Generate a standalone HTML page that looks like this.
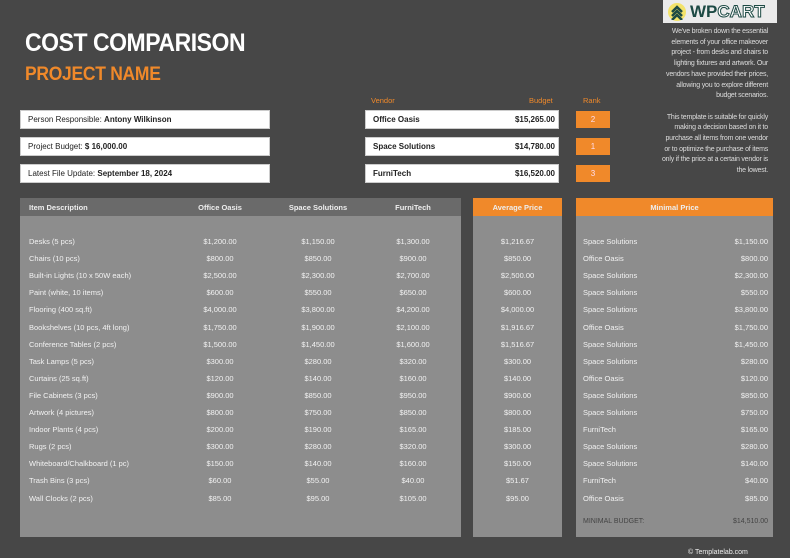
<!DOCTYPE html>
<html><head><meta charset="utf-8"><style>
*{margin:0;padding:0;box-sizing:border-box}
body{width:790px;height:558px;background:#474747;font-family:"Liberation Sans",sans-serif;position:relative;overflow:hidden;color:#fff}
.a{position:absolute;white-space:nowrap}
.box{position:absolute;background:#fff;color:#222;font-size:8px;line-height:17px;padding-left:7px;border:1px solid #ccc}
.rk{position:absolute;background:#f0892a;color:#fde;font-size:8px;text-align:center;line-height:17px;width:34px;height:17px;left:576px}
.t{font-size:7.5px;color:#f2f2f2}
.h{font-size:7.5px;color:#eee;font-weight:bold}
</style></head><body>
<div class="a" style="left:663px;top:0;width:114px;height:23px;background:#ebebeb;"></div>
<div class="a" style="left:668px;top:3px;width:18px;height:18px;border-radius:50%;background:#f3e36a"></div>
<svg class="a" style="left:670px;top:4px" width="14" height="16"><path d="M2 8 L7 3 L12 8 M2 12 L7 7 L12 12 M2 16 L7 11 L12 16" stroke="#1d4a44" stroke-width="2.5" fill="none"/></svg>
<div class="a" style="left:690px;top:2px;font-size:17px;font-weight:bold;color:#1d4a44;letter-spacing:0px">WP<span style="color:#fff;-webkit-text-stroke:1px #1d4a44">CART</span></div>
<div class="a" style="left:25px;top:29px;font-size:25px;font-weight:bold;letter-spacing:-0.5px;transform:scaleX(0.92);transform-origin:left">COST COMPARISON</div>
<div class="a" style="left:25px;top:64px;font-size:19px;font-weight:bold;color:#f0892a;letter-spacing:-0.3px;transform:scaleX(0.92);transform-origin:left">PROJECT NAME</div>
<div class="a" style="right:22px;top:27px;font-size:7px;line-height:10.7px;text-align:right;color:#ddd;letter-spacing:-0.2px">We've broken down the essential<br>elements of your office makeover<br>project - from desks and chairs to<br>lighting fixtures and artwork. Our<br>vendors have provided their prices,<br>allowing you to explore different<br>budget scenarios.<br><br>This template is suitable for quickly<br>making a decision based on it to<br>purchase all items from one vendor<br>or to optimize the purchase of items<br>only if the price at a certain vendor is<br>the lowest.</div>
<div class="a" style="left:371px;top:96px;font-size:7.5px;color:#f0892a">Vendor</div>
<div class="a" style="left:529px;top:96px;font-size:7.5px;color:#f0892a">Budget</div>
<div class="a" style="left:583px;top:96px;font-size:7.5px;color:#f0892a">Rank</div>
<div class="box" style="left:20px;top:110px;width:250px;height:19px">Person Responsible: <b>Antony Wilkinson</b></div>
<div class="box" style="left:20px;top:137px;width:250px;height:19px">Project Budget: <b>$ 16,000.00</b></div>
<div class="box" style="left:20px;top:164px;width:250px;height:19px">Latest File Update: <b>September 18, 2024</b></div>
<div class="box" style="left:365px;top:110px;width:194px;height:19px;font-weight:bold">Office Oasis<span style="float:right;padding-right:3px">$15,265.00</span></div>
<div class="box" style="left:365px;top:137px;width:194px;height:19px;font-weight:bold">Space Solutions<span style="float:right;padding-right:3px">$14,780.00</span></div>
<div class="box" style="left:365px;top:164px;width:194px;height:19px;font-weight:bold">FurniTech<span style="float:right;padding-right:3px">$16,520.00</span></div>
<div class="rk" style="top:111px">2</div><div class="rk" style="top:138px">1</div><div class="rk" style="top:165px">3</div>
<div class="a" style="left:20px;top:198px;width:441px;height:339px;background:#8d8d8d"></div>
<div class="a" style="left:20px;top:198px;width:441px;height:18px;background:#6a6a6a"></div>
<div class="a" style="left:473px;top:198px;width:89px;height:339px;background:#8d8d8d"></div>
<div class="a" style="left:473px;top:198px;width:89px;height:18px;background:#f0892a"></div>
<div class="a" style="left:576px;top:198px;width:197px;height:339px;background:#8d8d8d"></div>
<div class="a" style="left:576px;top:198px;width:197px;height:18px;background:#f0892a"></div>
<div class="a h" style="left:29px;top:203px">Item Description</div>
<div class="a h" style="left:180px;width:80px;text-align:center;top:203px">Office Oasis</div>
<div class="a h" style="left:278px;width:80px;text-align:center;top:203px">Space Solutions</div>
<div class="a h" style="left:373px;width:80px;text-align:center;top:203px">FurniTech</div>
<div class="a h" style="left:473px;width:89px;text-align:center;top:203px">Average Price</div>
<div class="a h" style="left:576px;width:197px;text-align:center;top:203px">Minimal Price</div>
<div id="rows"></div>
<div class="a" style="left:583px;top:518px;font-size:7px;color:#444">MINIMAL BUDGET:</div>
<div class="a" style="right:22px;top:518px;font-size:7px;color:#444">$14,510.00</div>
<script>
var d=[["Desks (5 pcs)","$1,200.00","$1,150.00","$1,300.00","$1,216.67","Space Solutions","$1,150.00"],
["Chairs (10 pcs)","$800.00","$850.00","$900.00","$850.00","Office Oasis","$800.00"],
["Built-in Lights (10 x 50W each)","$2,500.00","$2,300.00","$2,700.00","$2,500.00","Space Solutions","$2,300.00"],
["Paint (white, 10 items)","$600.00","$550.00","$650.00","$600.00","Space Solutions","$550.00"],
["Flooring (400 sq.ft)","$4,000.00","$3,800.00","$4,200.00","$4,000.00","Space Solutions","$3,800.00"],
["Bookshelves (10 pcs, 4ft long)","$1,750.00","$1,900.00","$2,100.00","$1,916.67","Office Oasis","$1,750.00"],
["Conference Tables (2 pcs)","$1,500.00","$1,450.00","$1,600.00","$1,516.67","Space Solutions","$1,450.00"],
["Task Lamps (5 pcs)","$300.00","$280.00","$320.00","$300.00","Space Solutions","$280.00"],
["Curtains (25 sq.ft)","$120.00","$140.00","$160.00","$140.00","Office Oasis","$120.00"],
["File Cabinets (3 pcs)","$900.00","$850.00","$950.00","$900.00","Space Solutions","$850.00"],
["Artwork (4 pictures)","$800.00","$750.00","$850.00","$800.00","Space Solutions","$750.00"],
["Indoor Plants (4 pcs)","$200.00","$190.00","$165.00","$185.00","FurniTech","$165.00"],
["Rugs (2 pcs)","$300.00","$280.00","$320.00","$300.00","Space Solutions","$280.00"],
["Whiteboard/Chalkboard (1 pc)","$150.00","$140.00","$160.00","$150.00","Space Solutions","$140.00"],
["Trash Bins (3 pcs)","$60.00","$55.00","$40.00","$51.67","FurniTech","$40.00"],
["Wall Clocks (2 pcs)","$85.00","$95.00","$105.00","$95.00","Office Oasis","$85.00"]];
var h="";d.forEach(function(r,i){var y=237+i*17.1;
h+='<div class="a t" style="left:29px;top:'+y+'px">'+r[0]+'</div>';
[180,278,373].forEach(function(x,j){h+='<div class="a t" style="left:'+x+'px;width:80px;text-align:center;top:'+y+'px">'+r[j+1]+'</div>'});
h+='<div class="a t" style="left:473px;width:89px;text-align:center;top:'+y+'px">'+r[4]+'</div>';
h+='<div class="a t" style="left:583px;top:'+y+'px">'+r[5]+'</div>';
h+='<div class="a t" style="right:22px;top:'+y+'px">'+r[6]+'</div>';});
document.getElementById("rows").innerHTML=h;
</script>
<div class="a" style="left:688px;top:549px;font-size:7px;color:#eee">© Templatelab.com</div>
</body></html>
